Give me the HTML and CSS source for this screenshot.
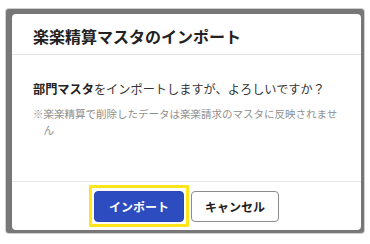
FILE: index.html
```html
<!DOCTYPE html>
<html lang="ja">
<head>
<meta charset="utf-8">
<link rel="stylesheet" href="styles.css">
</head>
<body>
<div class="frame">
  <div class="dialog">
    <div class="dialog-header">
      <h1 class="dialog-title">楽楽精算マスタのインポート</h1>
    </div>
    <div class="dialog-body">
      <p class="message"><strong>部門マスタ</strong>をインポートしますが、よろしいですか？</p>
      <p class="note">※楽楽精算で削除したデータは楽楽請求のマスタに反映されません</p>
    </div>
    <div class="dialog-footer">
      <button class="btn btn-primary">インポート</button>
      <button class="btn btn-secondary">キャンセル</button>
    </div>
  </div>
</div>
</body>
</html>
```

FILE: styles.css
```css
html, body {
  margin: 0;
  padding: 0;
  background: #ffffff;
}
body {
  font-family: "Noto Sans CJK JP", "Noto Sans", sans-serif;
  width: 370px;
  height: 244px;
  overflow: hidden;
}
.frame {
  margin: 9px 0 0 6px;
  width: 358px;
  height: 224px;
  box-sizing: border-box;
  padding: 5px 3px 3px 6px;
  background: #777777;
  border-radius: 3px;
  box-shadow: 0 0 0 1px #cfcfcf;
}
.dialog {
  width: 349px;
  height: 216px;
  background: #ffffff;
  border-radius: 4px;
  display: flex;
  flex-direction: column;
}
.dialog-header {
  height: 41px;
  box-sizing: border-box;
  padding: 4px 21px 0;
  display: flex;
  align-items: center;
  border-bottom: 1px solid #e3e3e3;
}
.dialog-title {
  margin: 0;
  font-size: 16px;
  font-weight: 700;
  color: #222222;
  line-height: 20px;
}
.dialog-body {
  height: 126px;
  box-sizing: border-box;
  padding: 25px 21px 0;
}
.message {
  margin: 0;
  font-size: 12.2px;
  line-height: 18px;
  color: #333333;
}
.message strong {
  font-weight: 700;
  color: #222222;
}
.note {
  margin: 8px 0 0;
  font-size: 10.5px;
  line-height: 16px;
  color: #8f8f8f;
  padding-left: 1em;
  text-indent: -1em;
}
.dialog-footer {
  border-top: 1px solid #e6e6e6;
  padding-top: 9px;
  display: flex;
  justify-content: center;
  gap: 7px;
}
.btn {
  height: 31px;
  box-sizing: border-box;
  border-radius: 4px;
  font-family: inherit;
  font-size: 12px;
  font-weight: 700;
  padding: 0;
  display: flex;
  align-items: center;
  justify-content: center;
}
.btn-primary {
  position: relative;
  width: 90px;
  background: #2c4cbf;
  color: #ffffff;
  border: 1px solid #2a47b5;
}
.btn-primary::after {
  content: "";
  position: absolute;
  top: -7px;
  bottom: -6px;
  left: -6px;
  right: -6px;
  border: 3px solid #ffe51a;
  border-radius: 1px;
  pointer-events: none;
}
.btn-secondary {
  width: 88px;
  background: #ffffff;
  color: #222222;
  border: 1px solid #8c8c8c;
}
```
